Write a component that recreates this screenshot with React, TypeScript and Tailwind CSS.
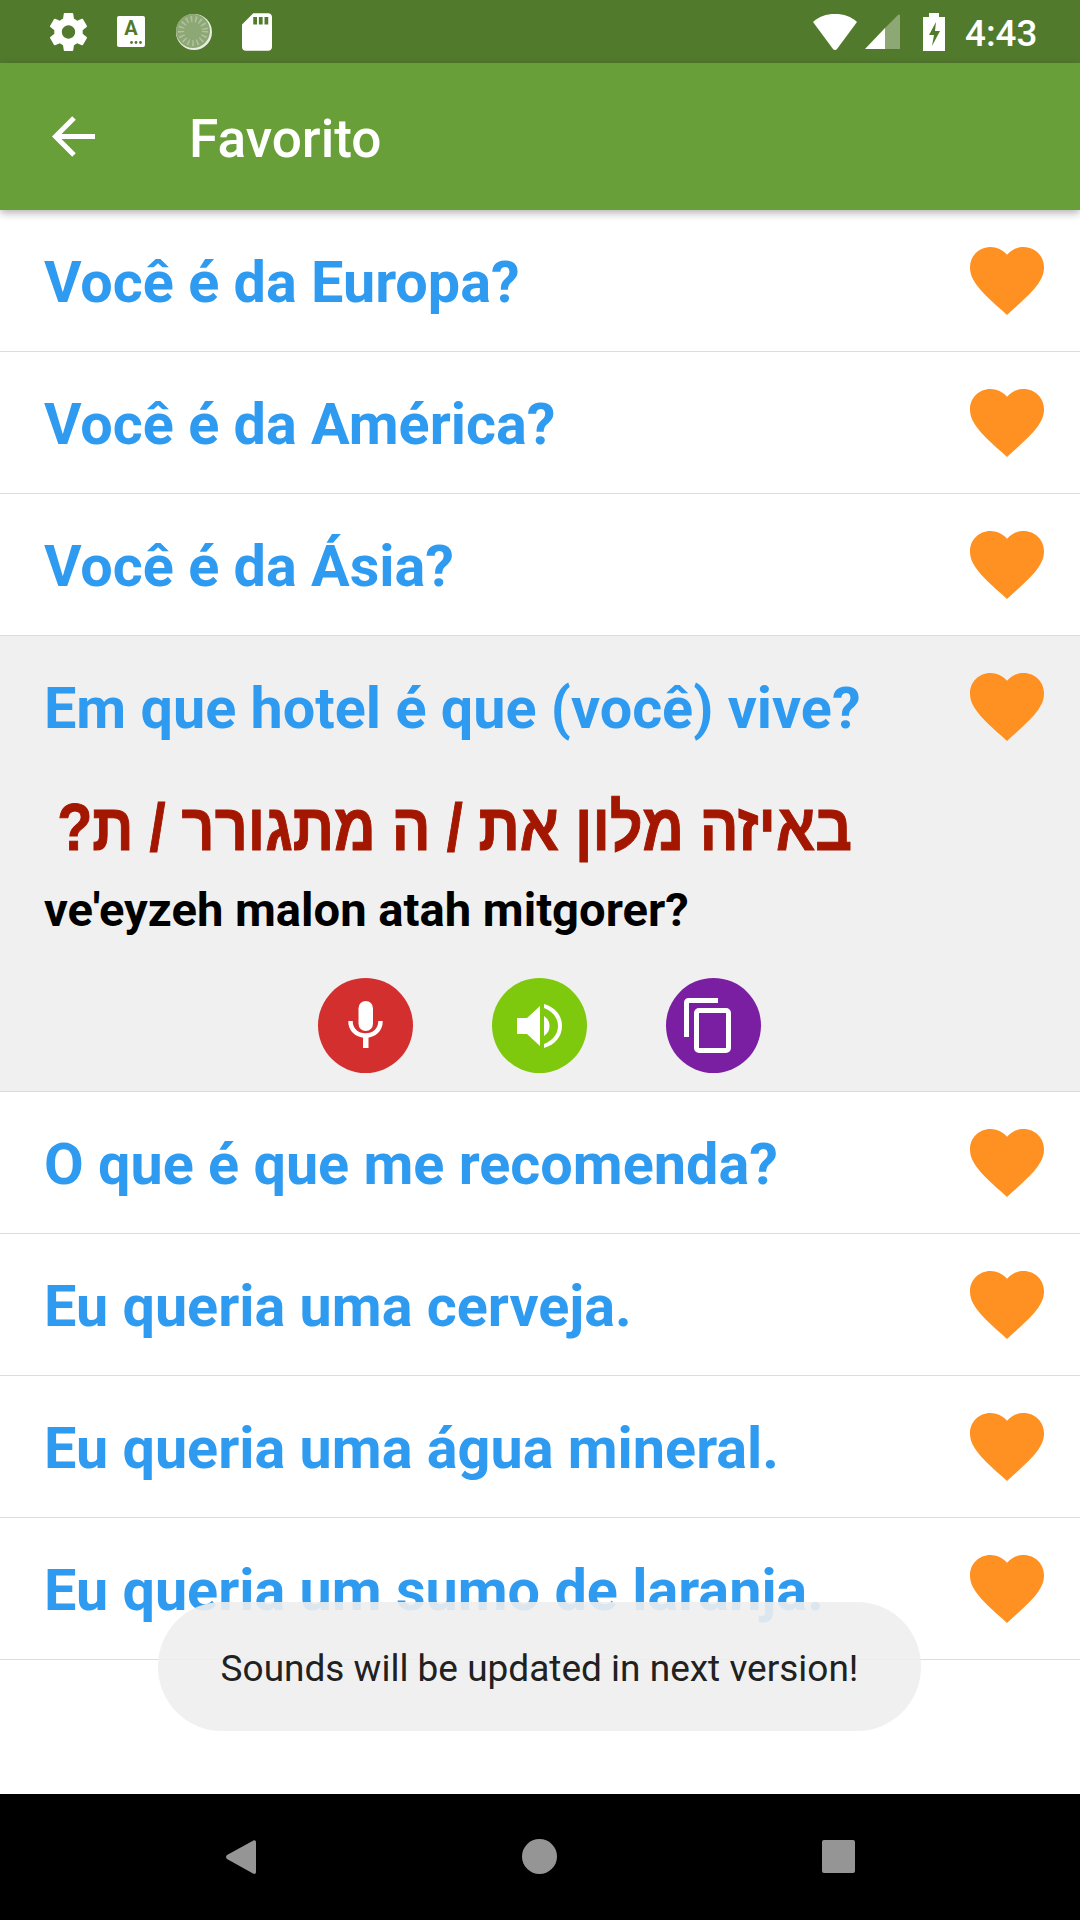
import React from "react";

const HEART = "M12 21.35l-1.45-1.32C5.4 15.36 2 12.28 2 8.5 2 5.42 4.42 3 7.5 3c1.74 0 3.41.81 4.5 2.09C13.09 3.81 14.76 3 16.5 3 19.58 3 22 5.42 22 8.5c0 3.78-3.4 6.86-8.55 11.54L12 21.35z";

function Heart() {
  return (
    <svg viewBox="2 3 20 18.35" className="w-[74px] h-[68px] shrink-0 block" fill="#ff9122">
      <path d={HEART} />
    </svg>
  );
}

function PhraseTitle({ text }: { text: string }) {
  return (
    <span className="text-[57.55px] leading-[62px] font-bold text-[#2f9bf0] whitespace-nowrap pt-[4px]">{text}</span>
  );
}

function Row({ text }: { text: string }) {
  return (
    <div className="h-[142px] shrink-0 flex items-center justify-between pl-[44px] pr-[36px] border-b-[1.5px] border-[#dcdcdc] bg-white">
      <PhraseTitle text={text} />
      <Heart />
    </div>
  );
}

function ExpandedRow() {
  return (
    <div className="h-[456px] shrink-0 flex flex-col bg-[#f0f0f0] border-b-[1.5px] border-[#dcdcdc]">
      <div className="h-[142px] shrink-0 flex items-center justify-between pl-[44px] pr-[36px]">
        <PhraseTitle text="Em que hotel é que (você) vive?" />
        <Heart />
      </div>
      <div dir="rtl" className="h-[80px] mt-[9px] pr-[228px] flex items-center text-[66px] leading-[80px] font-bold text-[#a31600] whitespace-nowrap [-webkit-text-stroke:1px_#a31600]" style={{ fontFamily: '"Liberation Sans", sans-serif' }}>
        <span className="inline-block origin-right scale-x-[0.8715]">באיזה מלון את / ה מתגורר / ת?</span>
      </div>
      <div className="mt-[13px] pl-[44px] h-[60px] flex items-center text-[47.15px] leading-[60px] font-bold text-black whitespace-nowrap">
        ve'eyzeh malon atah mitgorer?
      </div>
      <div className="mt-[38px] flex justify-center gap-[79px] pr-[1px]">
        <div className="w-[95px] h-[95px] rounded-full bg-[#d32f2f] flex items-center justify-center">
          <svg viewBox="0 0 35 47" className="w-[35px] h-[47px] mb-[2px]" fill="none">
            <rect x="10.5" y="0" width="14.5" height="30" rx="7.25" fill="#fff" />
            <path d="M2.5 20c0 9 6.500 14.500 15 14.500S32.500 29 32.500 20" stroke="#fff" strokeWidth="4.500" />
            <rect x="15" y="34" width="5.500" height="13" fill="#fff" />
          </svg>
        </div>
        <div className="w-[95px] h-[95px] rounded-full bg-[#7ec90e] flex items-center justify-center">
          <svg viewBox="0 0 45 44" className="w-[45px] h-[44px]" fill="#fff">
            <path d="M0 14h10L23 2v40L10 30H0z" />
            <path d="M27 12c4 3 5.500 6 5.500 10s-1.500 7-5.500 10z" />
            <path d="M27 0c11 3 18 11.500 18 22s-7 19-18 22v-4c8-3 14-9.500 14-18S35 7 27 4z" />
          </svg>
        </div>
        <div className="w-[95px] h-[95px] rounded-full bg-[#7b1fa2] flex items-center justify-center">
          <svg viewBox="0 0 47 55" className="w-[47px] h-[55px] mr-[12px]" fill="none" stroke="#fff" strokeWidth="5">
            <path d="M34 2.500H4.500a2 2 0 0 0-2 2V39" />
            <rect x="12.500" y="12.500" width="32" height="40" rx="2.500" />
          </svg>
        </div>
      </div>
    </div>
  );
}

function StatusBar() {
  return (
    <div className="h-[63px] shrink-0 bg-[#527a2d] flex items-center text-white">
      <svg viewBox="2.500 2 19 20" className="ml-[50px] w-[37px] h-[38px]" fill="#fff">
        <path d="M19.430 12.980c.040-.320.070-.640.070-.980s-.030-.660-.070-.980l2.110-1.650c.190-.150.240-.420.120-.640l-2-3.460c-.120-.220-.390-.300-.610-.220l-2.490 1c-.520-.400-1.080-.730-1.690-.980l-.380-2.650C14.460 2.180 14.250 2 14 2h-4c-.250 0-.460.180-.490.420l-.380 2.650c-.610.250-1.170.590-1.690.980l-2.490-1c-.230-.090-.490 0-.610.220l-2 3.460c-.130.220-.070.490.120.640l2.110 1.650c-.040.320-.070.650-.070.980s.030.660.070.980l-2.110 1.650c-.190.150-.240.420-.120.640l2 3.460c.120.220.390.300.610.220l2.490-1c.520.400 1.080.730 1.690.980l.380 2.650c.030.240.240.420.490.420h4c.250 0 .460-.180.490-.420l.380-2.650c.610-.250 1.170-.590 1.690-.980l2.490 1c.230.090.490 0 .610-.220l2-3.460c.120-.220.070-.490-.120-.640l-2.110-1.650zM12 15.500c-1.930 0-3.500-1.570-3.500-3.500s1.570-3.500 3.500-3.500 3.500 1.570 3.500 3.500-1.570 3.500-3.500 3.500z" />
      </svg>
      <div className="relative ml-[30px] w-[28px] h-[31px] bg-white rounded-[2px] flex justify-center">
        <span className="text-[#527a2d] text-[20px] leading-[24px] font-bold">A</span>
        <svg viewBox="0 0 12 3" className="absolute right-[3px] bottom-[3px] w-[12px] h-[3px]" fill="#527a2d">
          <circle cx="1.500" cy="1.500" r="1.400" />
          <circle cx="6" cy="1.500" r="1.400" />
          <circle cx="10.500" cy="1.500" r="1.400" />
        </svg>
      </div>
      <svg viewBox="0 0 36 36" className="ml-[31px] w-[36px] h-[36px]">
        <circle cx="18" cy="18" r="18" fill="#e8eee2" />
        <circle cx="17" cy="17" r="17" fill="#8ea875" />
        <circle cx="17" cy="17" r="12" fill="none" stroke="#b0c29f" strokeWidth="6" strokeDasharray="1.500 3" />
      </svg>
      <svg viewBox="4 2 16 20" className="ml-[30px] w-[30px] h-[38px]" fill="#fff">
        <path d="M18 2h-8L4.020 8 4 20c0 1.100.900 2 2 2h12c1.100 0 2-.900 2-2V4c0-1.100-.900-2-2-2zm-6 6h-2V4h2v4zm3 0h-2V4h2v4zm3 0h-2V4h2v4z" />
      </svg>
      <svg viewBox="0 0 44 36" className="ml-[541px] w-[44px] h-[36px]" fill="#fff">
        <path d="M22 0C13 0 6 2.500 0 8l20 27c1 1.300 3 1.300 4 0L44 8C38 2.500 31 0 22 0z" />
      </svg>
      <svg viewBox="0 0 35 35" className="ml-[8px] w-[35px] h-[35px]">
        <path d="M0 35 L20 14 V35z" fill="#fff" />
        <path d="M20 14 L33 1 c1-1 2-.500 2 1 V35H20z" fill="#8ea875" />
      </svg>
      <svg viewBox="0 0 22 38" className="ml-[23px] w-[22px] h-[38px]" fill="#fff">
        <path fillRule="evenodd" d="M6 0h10v4h6v34H0V4h6zM13 9L6 22h5l-2 11 8-15h-5z" />
      </svg>
      <span className="ml-[20px] text-[36.750px] leading-[63px] font-medium pt-[3px]">4:43</span>
    </div>
  );
}

function AppBar() {
  return (
    <div className="relative z-10 h-[147px] shrink-0 bg-[#689f38] flex items-center shadow-[0_3px_8px_rgba(0,0,0,0.3)] text-white">
      <svg viewBox="0 0 43 41" className="ml-[52px] w-[43px] h-[41px]" fill="none" stroke="#fff" strokeWidth="5">
        <path d="M43 20.500H4M22 2 3.500 20.500 22 39" />
      </svg>
      <span className="ml-[94px] text-[53.200px] leading-[62px] font-medium pt-[4px]">Favorito</span>
    </div>
  );
}

function NavBar() {
  return (
    <div className="h-[126px] shrink-0 bg-black flex items-center pb-[1px]">
      <svg viewBox="0 0 30 34" className="ml-[226px] w-[30px] h-[34px]" fill="#959595">
        <path d="M27 .700c1.500-1 3-.300 3 1.500V32c0 1.700-1.500 2.500-3 1.500L1 19c-1.300-1-1.300-3 0-4z" />
      </svg>
      <div className="ml-[266px] w-[35px] h-[35px] rounded-full bg-[#959595]" />
      <div className="ml-[265px] w-[33px] h-[33px] rounded-[2px] bg-[#959595]" />
    </div>
  );
}

export default function App() {
  return (
    <div className="relative w-[1080px] h-[1920px] flex flex-col overflow-hidden bg-white" style={{ fontFamily: 'Roboto, sans-serif' }}>
      <StatusBar />
      <AppBar />
      <div className="flex-1 flex flex-col overflow-hidden">
        <Row text="Você é da Europa?" />
        <Row text="Você é da América?" />
        <Row text="Você é da Ásia?" />
        <ExpandedRow />
        <Row text="O que é que me recomenda?" />
        <Row text="Eu queria uma cerveja." />
        <Row text="Eu queria uma água mineral." />
        <Row text="Eu queria um sumo de laranja." />
      </div>
      <NavBar />
      <div className="absolute left-[158px] top-[1602px] w-[763px] h-[129px] pt-[5px] rounded-[64px] bg-[#eeeeee]/90 flex items-center justify-center text-[37px] text-[#212121]">
        Sounds will be updated in next version!
      </div>
    </div>
  );
}
